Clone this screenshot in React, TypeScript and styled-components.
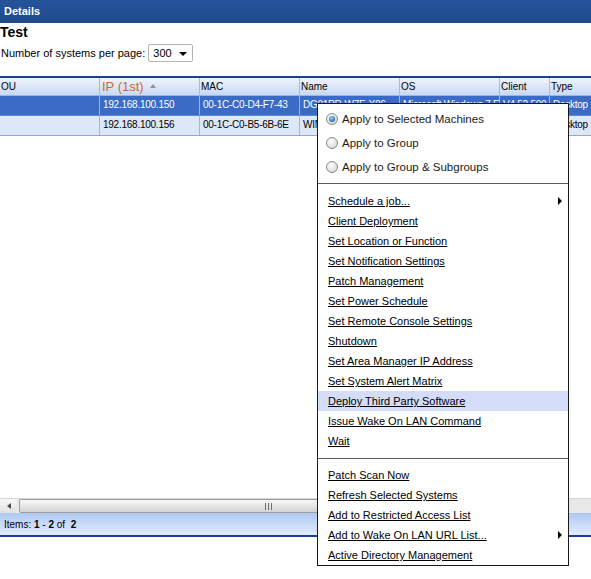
import React from "react";
import styled, { createGlobalStyle, css } from "styled-components";

// ── GLOBAL ─────────────────────────────

const GlobalStyle = createGlobalStyle`
  html, body {
    margin: 0;
    padding: 0;
    background: #ffffff;
  }
  body {
    font-family: "Liberation Sans", Arial, sans-serif;
    color: #000000;
  }
`;

// ── PAGE ───────────────────────────────

const Page = styled.div`
  position: relative;
  width: 591px;
  height: 579px;
  overflow: hidden;
  display: flex;
  flex-direction: column;
`;

const TitleBar = styled.div`
  height: 23px;
  background: linear-gradient(#25539a, #214b8d);
  color: #ffffff;
  font-size: 11px;
  font-weight: bold;
  display: flex;
  align-items: center;
  padding-left: 4px;
  padding-bottom: 1px;
  box-sizing: border-box;
`;

const Heading = styled.div`
  margin-top: 1px;
  font-size: 14px;
  font-weight: bold;
  line-height: 16px;
`;

const Pager = styled.div`
  margin-top: 4px;
  height: 18px;
  display: flex;
  align-items: center;
  gap: 3px;
  padding-left: 1px;
  font-size: 11px;
`;

const Select = styled.div`
  width: 45px;
  height: 18px;
  box-sizing: border-box;
  border: 1px solid #b4b4b4;
  border-radius: 2px;
  display: flex;
  align-items: center;
  justify-content: space-between;
  padding: 0 5px 0 4px;
  font-size: 11px;
  background: #ffffff;
`;

const Caret = styled.span`
  width: 0;
  height: 0;
  border-left: 4px solid transparent;
  border-right: 4px solid transparent;
  border-top: 4px solid #000000;
  margin-top: 1px;
`;

// ── GRID ───────────────────────────────

const Grid = styled.div`
  margin-top: 14px;
  height: 461px;
  display: flex;
  flex-direction: column;
  border-top: 2px solid #1d3f93;
  border-bottom: 2px solid #1d3f93;
  box-sizing: border-box;
`;

const Row = styled.div<{ $kind: "head" | "selected" | "plain" }>`
  display: grid;
  grid-template-columns: 100px 100px 100px 100px 100px 50px 60px;
  width: 610px;
  box-sizing: border-box;
  ${({ $kind }) =>
    $kind === "head"
      ? css`
          height: 18px;
          background: linear-gradient(#eff4fd, #c9d9f3);
          border-bottom: 1px solid #9db6e0;
        `
      : $kind === "selected"
        ? css`
            height: 20px;
            background: #3a6bc6;
            color: #ffffff;
            border-bottom: 1px solid #5f88d3;
          `
        : css`
            height: 20px;
            background: #dde7f8;
            border-bottom: 1px solid #8eaadc;
          `}
`;

const Cell = styled.div<{ $head?: boolean }>`
  border-right: 1px solid ${({ $head }) => ($head ? "#a6bbdf" : "#9fb6df")};
  overflow: hidden;
  white-space: nowrap;
  display: flex;
  align-items: center;
  padding: ${({ $head }) => ($head ? "0 0 0 1px" : "0 0 3px 3px")};
  font-size: 10px;
  letter-spacing: ${({ $head }) => ($head ? "0" : "-0.25px")};
`;

const SortLabel = styled.span`
  color: #d0682d;
  font-size: 13px;
  display: inline-flex;
  align-items: center;
  gap: 6px;
  margin-left: 1px;
`;

const SortArrow = styled.span`
  width: 0;
  height: 0;
  border-left: 3.5px solid transparent;
  border-right: 3.5px solid transparent;
  border-bottom: 4px solid #959595;
  margin-top: -2px;
`;

const GridBody = styled.div`
  flex: 1;
  background: #ffffff;
`;

const HScroll = styled.div`
  height: 15px;
  display: flex;
  background: #e8e8e8;
  border-top: 1px solid #d6d6d6;
  box-sizing: border-box;
`;

const ScrollButton = styled.div`
  width: 17px;
  display: flex;
  align-items: center;
  justify-content: center;
  background: linear-gradient(#f6f6f6, #e2e2e2);
`;

const ScrollLeftArrow = styled.span`
  width: 0;
  height: 0;
  border-top: 3.5px solid transparent;
  border-bottom: 3.5px solid transparent;
  border-right: 4px solid #4a4a4a;
`;

const Thumb = styled.div`
  margin-left: 2px;
  width: 498px;
  box-sizing: border-box;
  border: 1px solid #9d9d9d;
  border-radius: 2px;
  background: linear-gradient(#f7f7f7, #e6e6e6 50%, #d2d2d2);
  display: flex;
  align-items: center;
  justify-content: center;
`;

const Grip = styled.span`
  width: 7px;
  height: 7px;
  background: repeating-linear-gradient(
    90deg,
    #6e6e6e 0 1px,
    transparent 1px 3px
  );
`;

const Status = styled.div`
  height: 22px;
  background: linear-gradient(#adc9f4, #e4ecfb);
  display: flex;
  align-items: center;
  padding-left: 4px;
  font-size: 10px;
  white-space: pre;
`;

// ── CONTEXT MENU ───────────────────────

const Menu = styled.div`
  position: absolute;
  left: 317px;
  top: 103px;
  width: 252px;
  height: 463px;
  box-sizing: border-box;
  border: 1px solid #1a1a1a;
  background: #ffffff;
  padding-top: 3px;
  display: flex;
  flex-direction: column;
`;

const RadioItem = styled.label`
  height: 24px;
  display: flex;
  align-items: center;
  gap: 4px;
  padding-left: 8px;
  font-size: 11.5px;
  color: #1a1a1a;
`;

const RadioDot = styled.span<{ $checked?: boolean }>`
  width: 12px;
  height: 12px;
  box-sizing: border-box;
  border-radius: 50%;
  border: 1px solid #8c8c8c;
  background: radial-gradient(circle at 40% 35%, #ffffff, #dcdcdc 70%, #c4c4c4);
  display: flex;
  align-items: center;
  justify-content: center;

  &::after {
    content: "";
    width: 6px;
    height: 6px;
    border-radius: 50%;
    background: ${({ $checked }) =>
      $checked
        ? "radial-gradient(circle at 40% 35%, #8fd3ff, #1f6fb8 70%, #0d3f7a)"
        : "transparent"};
  }
`;

const Separator = styled.div<{ $before: number; $after: number }>`
  height: 1px;
  background: #5c5c5c;
  margin: ${({ $before, $after }) => `${$before}px 0 ${$after}px`};
`;

const MenuLink = styled.a<{ $active?: boolean }>`
  height: 20px;
  display: flex;
  align-items: center;
  justify-content: space-between;
  padding: 0 6px 0 10px;
  font-size: 11px;
  color: #000000;
  text-decoration: underline;
  cursor: pointer;
  background: ${({ $active }) => ($active ? "#d4dcf7" : "transparent")};
`;

const SubArrow = styled.span`
  width: 0;
  height: 0;
  border-top: 4px solid transparent;
  border-bottom: 4px solid transparent;
  border-left: 4px solid #000000;
`;

// ── DATA ───────────────────────────────

const columns = ["OU", "IP (1st)", "MAC", "Name", "OS", "Client", "Type"];

const systems = [
  {
    ou: "",
    ip: "192.168.100.150",
    mac: "00-1C-C0-D4-F7-43",
    name: "DG01PR-W7E-X86",
    os: "Microsoft Windows 7 E",
    client: "V4.52.500",
    type: "Desktop",
  },
  {
    ou: "",
    ip: "192.168.100.156",
    mac: "00-1C-C0-B5-6B-6E",
    name: "WIN7-PC02",
    os: "Microsoft Windows 7 E",
    client: "V4.52.500",
    type: "Desktop",
  },
];

const scopes = [
  "Apply to Selected Machines",
  "Apply to Group",
  "Apply to Group & Subgroups",
];

const actions = [
  { label: "Schedule a job...", sub: true },
  { label: "Client Deployment" },
  { label: "Set Location or Function" },
  { label: "Set Notification Settings" },
  { label: "Patch Management" },
  { label: "Set Power Schedule" },
  { label: "Set Remote Console Settings" },
  { label: "Shutdown" },
  { label: "Set Area Manager IP Address" },
  { label: "Set System Alert Matrix" },
  { label: "Deploy Third Party Software", active: true },
  { label: "Issue Wake On LAN Command" },
  { label: "Wait" },
];

const moreActions = [
  { label: "Patch Scan Now" },
  { label: "Refresh Selected Systems" },
  { label: "Add to Restricted Access List" },
  { label: "Add to Wake On LAN URL List...", sub: true },
  { label: "Active Directory Management" },
];

type Action = { label: string; sub?: boolean; active?: boolean };

function ActionLink({ item }: { item: Action }) {
  return (
    <MenuLink $active={item.active}>
      <span>{item.label}</span>
      {item.sub && <SubArrow />}
    </MenuLink>
  );
}

// ── APP ────────────────────────────────

export default function App() {
  return (
    <>
      <GlobalStyle />
      <Page>
        <TitleBar>Details</TitleBar>
        <Heading>Test</Heading>
        <Pager>
          Number of systems per page:
          <Select>
            300
            <Caret />
          </Select>
        </Pager>

        <Grid>
          <Row $kind="head">
            {columns.map((c) => (
              <Cell $head key={c}>
                {c === "IP (1st)" ? (
                  <SortLabel>
                    {c}
                    <SortArrow />
                  </SortLabel>
                ) : (
                  c
                )}
              </Cell>
            ))}
          </Row>
          {systems.map((s, i) => (
            <Row $kind={i === 0 ? "selected" : "plain"} key={s.ip}>
              <Cell>{s.ou}</Cell>
              <Cell>{s.ip}</Cell>
              <Cell>{s.mac}</Cell>
              <Cell>{s.name}</Cell>
              <Cell>{s.os}</Cell>
              <Cell>{s.client}</Cell>
              <Cell>{s.type}</Cell>
            </Row>
          ))}
          <GridBody />
          <HScroll>
            <ScrollButton>
              <ScrollLeftArrow />
            </ScrollButton>
            <Thumb>
              <Grip />
            </Thumb>
          </HScroll>
          <Status>
            Items: <b>1</b> - <b>2</b> of  <b>2</b>
          </Status>
        </Grid>

        <Menu>
          {scopes.map((s, i) => (
            <RadioItem key={s}>
              <RadioDot $checked={i === 0} />
              {s}
            </RadioItem>
          ))}
          <Separator $before={4} $after={7} />
          {actions.map((a) => (
            <ActionLink item={a} key={a.label} />
          ))}
          <Separator $before={7} $after={6} />
          {moreActions.map((a) => (
            <ActionLink item={a} key={a.label} />
          ))}
        </Menu>
      </Page>
    </>
  );
}
